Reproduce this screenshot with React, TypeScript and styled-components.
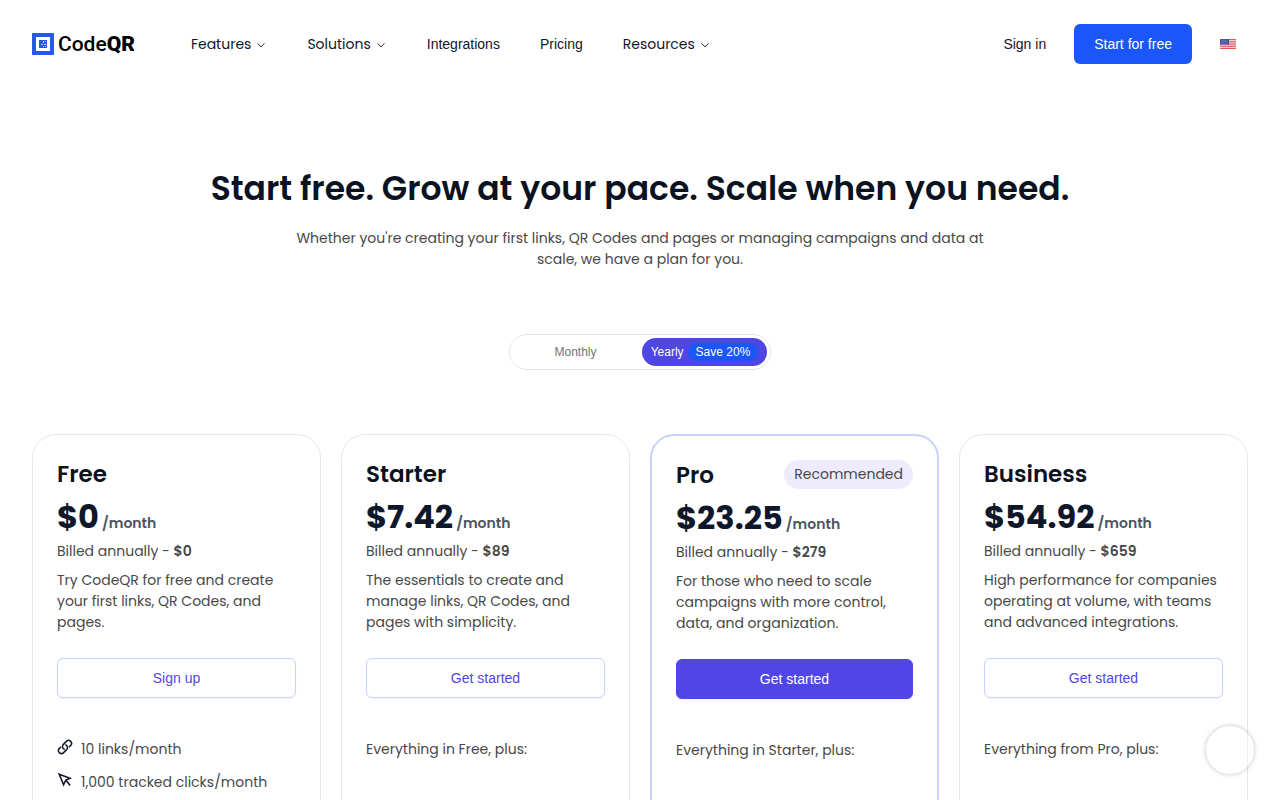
import React from "react";
import styled, { createGlobalStyle, css } from "styled-components";

const heading = '"Poppins", "Inter", sans-serif';
const ui = '"Liberation Sans", Arial, sans-serif';

const GlobalStyle = createGlobalStyle`
  *, *::before, *::after { box-sizing: border-box; }
  body { margin: 0; background: #fff; color: #0f172a; font: 14px/21px ${heading}; }
  h1, h2, p, ul { margin: 0; padding: 0; }
  ul { list-style: none; }
  a { color: inherit; text-decoration: none; }
  button { font: inherit; color: inherit; cursor: pointer; background: none; border: 0; padding: 0; }
`;

const Header = styled.header`
  display: flex;
  align-items: center;
  height: 88px;
  padding: 0 32px;
`;

const Brand = styled.a`
  display: flex;
  align-items: center;
  gap: 4px;
  margin-right: 56px;
  font: 500 21px/24px Roboto, sans-serif;
  color: #000;
  b { font-weight: 900; }
`;

const Nav = styled.nav`
  display: flex;
  align-items: center;
  gap: 40px;
  flex: 1;
`;

const NavLink = styled.a`
  font: 14px/20px ${ui};
`;

const NavMenu = styled.button`
  display: flex;
  align-items: center;
  gap: 4px;
`;

const Actions = styled.div`
  display: flex;
  align-items: center;
  gap: 28px;
`;

const StartLink = styled.a`
  padding: 0 20px;
  border-radius: 6px;
  background: #1a56f8;
  color: #fff;
  font: 14px/40px ${ui};
`;

const Language = styled.button`
  display: flex;
  padding: 8px 12px 8px 0;
`;

const Hero = styled.section`
  display: flex;
  flex-direction: column;
  align-items: center;
  padding: 77px 32px 64px;
  text-align: center;
`;

const Title = styled.h1`
  font-size: 33px;
  line-height: 48px;
  font-weight: 600;
  color: #0b1220;
`;

const Lead = styled.p`
  max-width: 704px;
  margin-top: 15px;
  color: #484848;
`;

const Toggle = styled.div`
  display: grid;
  grid-template-columns: 125px 125px;
  gap: 4px;
  margin-top: 64px;
  padding: 3px;
  border: 1px solid #e5e7eb;
  border-radius: 18px;
`;

const Period = styled.button<{ $active?: boolean }>`
  display: flex;
  align-items: center;
  justify-content: center;
  gap: 4px;
  height: 28px;
  border-radius: 14px;
  font: 12px/18px ${ui};
  color: #737373;
  ${(p) => p.$active && css`background: #4f46e5; color: #fff;`}
`;

const Saving = styled.span`
  padding: 0 8px;
  border-radius: 9px;
  background: #1a56f8;
`;

const Plans = styled.main`
  display: grid;
  grid-template-columns: repeat(4, minmax(0, 1fr));
  gap: 20px;
  padding: 0 32px 64px;
`;

const Card = styled.article<{ $featured?: boolean }>`
  display: flex;
  flex-direction: column;
  min-height: 480px;
  padding: 24px;
  border: ${(p) => (p.$featured ? "2px solid #c7d2fe" : "1px solid #e5e7eb")};
  border-radius: 24px;
  color: #484848;
`;

const CardHead = styled.div`
  display: flex;
  align-items: flex-start;
  justify-content: space-between;
  height: 30px;
`;

const PlanName = styled.h2`
  font-size: 23px;
  line-height: 30px;
  font-weight: 600;
  color: #0b1220;
`;

const Tag = styled.span`
  padding: 4px 10px;
  border-radius: 15px;
  background: #eeebfc;
`;

const Price = styled.p`
  display: flex;
  align-items: baseline;
  gap: 3px;
  margin-top: 8px;
  font-weight: 600;
  color: #4b5563;
  b { font-size: 32px; line-height: 40px; font-weight: 700; color: #0f172a; }
`;

const Billing = styled.p`
  margin-top: 4px;
  b { font-weight: 600; }
`;

const Summary = styled.p`
  min-height: 63px;
  margin-top: 8px;
`;

const PlanButton = styled.button<{ $featured?: boolean }>`
  height: 40px;
  margin-top: 25px;
  border: 1px solid #c7d2fe;
  border-radius: 6px;
  box-shadow: 0 1px 2px rgba(0, 0, 0, 0.05);
  font: 14px/20px ${ui};
  color: #4f46e5;
  ${(p) => p.$featured && css`background: #4f46e5; border-color: #4f46e5; color: #fff;`}
`;

const Features = styled.ul`
  display: grid;
  gap: 12px;
  margin-top: 41px;
`;

const Feature = styled.li`
  display: flex;
  gap: 8px;
`;

const Chat = styled.button`
  position: fixed;
  right: 26px;
  bottom: 26px;
  width: 48px;
  height: 48px;
  border-radius: 50%;
  background: rgba(255, 255, 255, 0.3);
  box-shadow: 0 0 5px rgba(0, 0, 0, 0.25);
`;

const Logo = () => (
  <svg width="22" height="22" viewBox="0 0 22 22" aria-hidden="true">
    <path fill="#2459ec" d="M0 0h22v22H0z" />
    <path fill="#fff" d="M4 4h14v14H4z" />
    <path fill="#2459ec" d="M7 7h8v8H7z" />
    <path fill="#b6c8fa" d="M11 8h1v2h-1zM13 8h1v1h-1zM9 11h2v1H9zM12 11h2v1h-2zM11 13h1v1h-1zM13 13h1v1h-1z" />
  </svg>
);

const Chevron = () => (
  <svg width="12" height="12" viewBox="0 0 12 12" fill="none" stroke="#1f2937" aria-hidden="true">
    <path d="M2.5 5.5 6 8.8 9.5 5.5" />
  </svg>
);

const Flag = () => (
  <svg width="16" height="10" viewBox="0 0 16 10" aria-hidden="true">
    <path fill="#fbe9eb" d="M0 0h16v10H0z" />
    <path stroke="#dc4650" strokeWidth=".9" d="M0 .5h16M0 2.3h16M0 4.1h16M0 5.9h16M0 7.7h16M0 9.5h16" />
    <path fill="#41479b" d="M0 0h9v5.5H0z" />
    <path stroke="#c9cbe6" strokeWidth=".7" strokeDasharray=".8 1" d="M1 1.2h7M1.8 2.7h6M1 4.2h7" />
  </svg>
);

const LinkIcon = () => (
  <svg width="16" height="16" viewBox="0 0 24 24" fill="none" stroke="#111827" strokeWidth="2.2" strokeLinecap="round" strokeLinejoin="round" aria-hidden="true">
    <path d="M13.19 8.688a4.5 4.5 0 0 1 1.242 7.244l-4.5 4.5a4.5 4.5 0 0 1-6.364-6.364l1.757-1.757m13.35-.622 1.757-1.757a4.5 4.5 0 0 0-6.364-6.364l-4.5 4.5a4.5 4.5 0 0 0 1.242 7.244" />
  </svg>
);

const PointerIcon = () => (
  <svg width="16" height="16" viewBox="0 0 16 16" fill="none" stroke="#111827" strokeWidth="1.6" aria-hidden="true">
    <path d="M2.2 2.2 13 6.2 8.8 8 6.6 12.8ZM8.8 8 13.2 13.4" />
  </svg>
);

type Plan = {
  name: string; price: string; total: string; summary: string; action: string; intro?: string; featured?: boolean;
};

const plans: Plan[] = [
  { name: "Free", price: "$0", total: "$0", summary: "Try CodeQR for free and create your first links, QR Codes, and pages.", action: "Sign up" },
  { name: "Starter", price: "$7.42", total: "$89", summary: "The essentials to create and manage links, QR Codes, and pages with simplicity.", action: "Get started", intro: "Everything in Free, plus:" },
  { name: "Pro", price: "$23.25", total: "$279", summary: "For those who need to scale campaigns with more control, data, and organization.", action: "Get started", intro: "Everything in Starter, plus:", featured: true },
  { name: "Business", price: "$54.92", total: "$659", summary: "High performance for companies operating at volume, with teams and advanced integrations.", action: "Get started", intro: "Everything from Pro, plus:" },
];

export default function App() {
  return (
    <>
      <GlobalStyle />
      <Header>
        <Brand href="#"><Logo /><span>Code<b>QR</b></span></Brand>
        <Nav>
          <NavMenu>Features <Chevron /></NavMenu>
          <NavMenu>Solutions <Chevron /></NavMenu>
          <NavLink href="#">Integrations</NavLink>
          <NavLink href="#">Pricing</NavLink>
          <NavMenu>Resources <Chevron /></NavMenu>
        </Nav>
        <Actions>
          <NavLink href="#">Sign in</NavLink>
          <StartLink href="#">Start for free</StartLink>
          <Language aria-label="Language"><Flag /></Language>
        </Actions>
      </Header>
      <Hero>
        <Title>Start free. Grow at your pace. Scale when you need.</Title>
        <Lead>Whether you're creating your first links, QR Codes and pages or managing campaigns and data at scale, we have a plan for you.</Lead>
        <Toggle role="group" aria-label="Billing period">
          <Period aria-pressed="false">Monthly</Period>
          <Period $active aria-pressed="true">Yearly <Saving>Save 20%</Saving></Period>
        </Toggle>
      </Hero>
      <Plans>
        {plans.map((plan) => (
          <Card key={plan.name} $featured={plan.featured}>
            <CardHead>
              <PlanName>{plan.name}</PlanName>
              {plan.featured && <Tag>Recommended</Tag>}
            </CardHead>
            <Price><b>{plan.price}</b>/month</Price>
            <Billing>Billed annually - <b>{plan.total}</b></Billing>
            <Summary>{plan.summary}</Summary>
            <PlanButton $featured={plan.featured}>{plan.action}</PlanButton>
            <Features>
              {plan.intro ? (
                <Feature>{plan.intro}</Feature>
              ) : (
                <>
                  <Feature><LinkIcon />10 links/month</Feature>
                  <Feature><PointerIcon />1,000 tracked clicks/month</Feature>
                </>
              )}
            </Features>
          </Card>
        ))}
      </Plans>
      <Chat aria-label="Open chat" />
    </>
  );
}
